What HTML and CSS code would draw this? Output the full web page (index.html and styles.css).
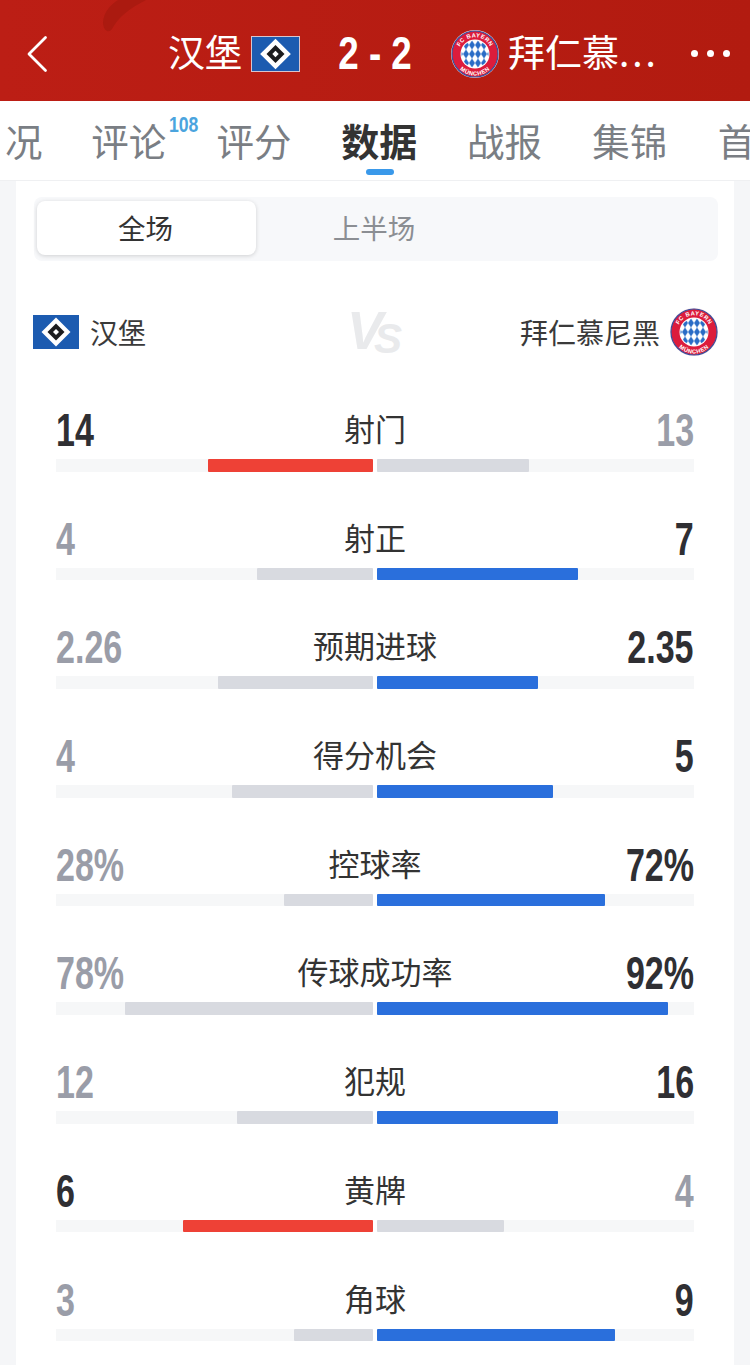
FILE: index.html
```html
<!DOCTYPE html>
<html lang="zh-CN">
<head>
<meta charset="utf-8">
<title>汉堡 2-2 拜仁慕尼黑</title>
<link rel="stylesheet" href="styles.css">
</head>
<body>
<svg class="defs" width="0" height="0" aria-hidden="true">
  <defs>
    <pattern id="loz" width="6" height="9" patternUnits="userSpaceOnUse" x="0" y="1.500">
      <rect width="6" height="9" fill="#fff"/>
      <path d="M3 0 6 4.500 3 9 0 4.500Z" fill="#2a6cc6"/>
    </pattern>
    <path id="arcTop" d="M7.200 24a16.800 16.800 0 0 1 33.600 0"/>
    <path id="arcBot" d="M2.500 24a21.500 21.500 0 0 0 43 0"/>
    <symbol id="hsv" viewBox="0 0 46 34">
      <rect width="46" height="34" fill="#1c5bb0"/>
      <path d="M23 2.500 37.500 17 23 31.500 8.500 17Z" fill="#fff"/>
      <path d="M23 8.500 31.500 17 23 25.500 14.500 17Z" fill="#1c1c1e"/>
      <path d="M23 14 26 17 23 20 20 17Z" fill="#fff"/>
    </symbol>
    <symbol id="fcb" viewBox="0 0 48 48">
      <circle cx="24" cy="24" r="24" fill="#f3dfe6"/>
      <circle cx="24" cy="24" r="23" fill="#dc1c3c" stroke="#3a4f9c" stroke-width="1.200"/>
      <circle cx="24" cy="24" r="14.500" fill="#fff"/>
      <circle cx="24" cy="24" r="13.500" fill="url(#loz)"/>
      <text class="crest-text"><textPath href="#arcTop" startOffset="50%" text-anchor="middle">FC BAYERN</textPath></text>
      <text class="crest-text"><textPath href="#arcBot" startOffset="50%" text-anchor="middle">MÜNCHEN</textPath></text>
    </symbol>
  </defs>
</svg>

<header class="topbar">
  <svg class="swoosh" width="160" height="34" viewBox="0 0 160 34" aria-hidden="true">
    <path d="M146 0C128 9 118 18 112 29 108 34 103 30 103 22 104 12 110 5 118 0Z" fill="#ab1a10"/>
  </svg>
  <svg class="back" width="24" height="38" viewBox="0 0 24 38" aria-hidden="true">
    <path d="M20.500 2.500 4 19l16.500 16.500" fill="none" stroke="#fff" stroke-width="2.800" stroke-linecap="round" stroke-linejoin="round"/>
  </svg>
  <span class="team-title home-title">汉堡</span>
  <svg class="flag-top"><use href="#hsv"/></svg>
  <span class="score"><b class="narrow">2 - 2</b></span>
  <svg class="crest-top"><use href="#fcb"/></svg>
  <span class="team-title away-title">拜仁慕<span class="dots">...</span></span>
  <span class="more" aria-hidden="true"><i></i><i></i><i></i></span>
</header>

<nav class="tabs">
  <span class="tab tab-first">况</span>
  <span class="tab">评论<sup class="badge">108</sup></span>
  <span class="tab">评分</span>
  <span class="tab active">数据</span>
  <span class="tab">战报</span>
  <span class="tab">集锦</span>
  <span class="tab">首页</span>
</nav>

<main class="card">
  <div class="segment">
    <span class="seg seg-on">全场</span>
    <span class="seg">上半场</span>
  </div>

  <div class="teams">
    <div class="team">
      <svg class="flag"><use href="#hsv"/></svg>
      <span>汉堡</span>
    </div>
    <div class="vs" aria-label="VS"><span class="vs-v">V</span><span class="vs-s">S</span></div>
    <div class="team team-away">
      <span>拜仁慕尼黑</span>
      <svg class="crest"><use href="#fcb"/></svg>
    </div>
  </div>

  <section class="stats">
    <div class="stat">
      <div class="head"><span class="num win-num"><b>14</b></span><span class="label">射门</span><span class="num end"><b>13</b></span></div>
      <div class="bars"><div class="track left"><div class="fill red" style="width:52.05%"></div></div><div class="track"><div class="fill gray" style="width:47.95%"></div></div></div>
    </div>
    <div class="stat">
      <div class="head"><span class="num"><b>4</b></span><span class="label">射正</span><span class="num win-num end"><b>7</b></span></div>
      <div class="bars"><div class="track left"><div class="fill gray" style="width:36.59%"></div></div><div class="track"><div class="fill blue" style="width:63.41%"></div></div></div>
    </div>
    <div class="stat">
      <div class="head"><span class="num"><b>2.26</b></span><span class="label">预期进球</span><span class="num win-num end"><b>2.35</b></span></div>
      <div class="bars"><div class="track left"><div class="fill gray" style="width:48.9%"></div></div><div class="track"><div class="fill blue" style="width:50.79%"></div></div></div>
    </div>
    <div class="stat">
      <div class="head"><span class="num"><b>4</b></span><span class="label">得分机会</span><span class="num win-num end"><b>5</b></span></div>
      <div class="bars"><div class="track left"><div class="fill gray" style="width:44.48%"></div></div><div class="track"><div class="fill blue" style="width:55.52%"></div></div></div>
    </div>
    <div class="stat">
      <div class="head"><span class="num"><b>28%</b></span><span class="label">控球率</span><span class="num win-num end"><b>72%</b></span></div>
      <div class="bars"><div class="track left"><div class="fill gray" style="width:28.08%"></div></div><div class="track"><div class="fill blue" style="width:71.92%"></div></div></div>
    </div>
    <div class="stat">
      <div class="head"><span class="num"><b>78%</b></span><span class="label">传球成功率</span><span class="num win-num end"><b>92%</b></span></div>
      <div class="bars"><div class="track left"><div class="fill gray" style="width:78.23%"></div></div><div class="track"><div class="fill blue" style="width:91.8%"></div></div></div>
    </div>
    <div class="stat">
      <div class="head"><span class="num"><b>12</b></span><span class="label">犯规</span><span class="num win-num end"><b>16</b></span></div>
      <div class="bars"><div class="track left"><div class="fill gray" style="width:42.9%"></div></div><div class="track"><div class="fill blue" style="width:57.1%"></div></div></div>
    </div>
    <div class="stat">
      <div class="head"><span class="num win-num"><b>6</b></span><span class="label">黄牌</span><span class="num end"><b>4</b></span></div>
      <div class="bars"><div class="track left"><div class="fill red" style="width:59.94%"></div></div><div class="track"><div class="fill gray" style="width:40.06%"></div></div></div>
    </div>
    <div class="stat">
      <div class="head"><span class="num"><b>3</b></span><span class="label">角球</span><span class="num win-num end"><b>9</b></span></div>
      <div class="bars"><div class="track left"><div class="fill gray" style="width:24.92%"></div></div><div class="track"><div class="fill blue" style="width:75.08%"></div></div></div>
    </div>
  </section>
</main>
</body>
</html>
```

FILE: styles.css
```css
* { box-sizing: border-box; }

html, body {
  margin: 0;
  height: 1365px;
  overflow: hidden;
}

body {
  background: #f5f6f8;
  color: #333;
  font-family: "Noto Sans CJK SC", "Liberation Sans", sans-serif;
}

.defs { position: absolute; }

.crest-text {
  font: 700 5.800px "Liberation Sans", sans-serif;
  fill: #fff;
  letter-spacing: .5px;
}

/* top bar */
.topbar {
  position: relative;
  height: 101px;
  display: flex;
  align-items: center;
  padding-left: 25px;
  background: linear-gradient(90deg, #bc1e15, #b21b10);
  color: #fff;
}

.swoosh { position: absolute; left: 0; top: 0; }

.back { margin-top: 6px; flex: none; }

.team-title {
  font-size: 37px;
  line-height: 50px;
  white-space: nowrap;
}

.home-title { margin-left: 119px; }

.dots { letter-spacing: 3px; }

.flag-top {
  width: 49px;
  height: 36px;
  margin-left: 9px;
  margin-top: 6px;
  outline: 1.500px solid #d9c4cc;
  outline-offset: -1.500px;
}

.score {
  width: 75px;
  margin-left: 38px;
  margin-top: 5px;
  display: flex;
  justify-content: center;
  font-size: 46px;
  line-height: 50px;
}

.narrow {
  display: inline-block;
  white-space: nowrap;
  font-family: "Liberation Sans", sans-serif;
  font-weight: 700;
  transform: scaleX(.8);
}

.crest-top {
  width: 48px;
  height: 48px;
  margin-left: 38px;
  margin-top: 7px;
  flex: none;
}

.away-title { margin-left: 9px; width: 148px; }

.more {
  display: flex;
  gap: 9px;
  margin-left: 35px;
  margin-top: 5px;
}

.more i {
  width: 7px;
  height: 7px;
  border-radius: 50%;
  background: #fff;
}

/* tabs */
.tabs {
  height: 80px;
  display: flex;
  background: #fff;
  overflow: hidden;
  border-bottom: 1px solid #eff0f2;
}

.tab {
  position: relative;
  flex: 0 0 125.300px;
  height: 79px;
  text-align: center;
  font-size: 37.500px;
  line-height: 78px;
  color: #7a7e84;
  white-space: nowrap;
}

.tab-first {
  flex-basis: 66px;
  text-align: left;
  padding-left: 5px;
}

.active {
  color: #333;
  font-weight: 700;
  font-size: 38px;
}

.active::after {
  content: "";
  position: absolute;
  left: 49px;
  bottom: 5px;
  width: 28px;
  height: 6px;
  border-radius: 3px;
  background: #3a99ea;
}

.badge {
  position: absolute;
  top: 12px;
  left: 103px;
  font-family: "Liberation Sans", sans-serif;
  font-weight: 700;
  font-size: 22px;
  line-height: 24px;
  color: #4ba4de;
  transform: scaleX(.8);
  transform-origin: left center;
}

/* card */
.card {
  margin: 0 16px;
  height: 1184px;
  background: #fff;
  padding: 16px 16px 0;
  overflow: hidden;
}

.segment {
  height: 64px;
  margin-left: 2px;
  display: flex;
  padding: 4px 3px;
  border-radius: 8px;
  background: #f7f8fa;
}

.seg {
  flex: 0 0 236px;
  height: 54px;
  padding-bottom: 3px;
  display: flex;
  align-items: center;
  justify-content: center;
  font-size: 27.500px;
  color: #8b8e93;
}

.seg-on {
  flex: 0 0 219px;
  padding-right: 2px;
  border-radius: 8px;
  background: #fff;
  color: #333;
  box-shadow: 0 1px 4px rgba(0, 0, 0, .16);
}

.teams {
  height: 48px;
  margin-top: 47px;
  display: grid;
  grid-template-columns: 1fr auto 1fr;
  align-items: center;
}

.team {
  display: flex;
  align-items: center;
  gap: 11px;
  font-size: 28px;
  color: #3a3a3a;
  line-height: 46px;
}

.team-away {
  justify-content: flex-end;
  gap: 10px;
}

.flag {
  width: 46px;
  height: 34px;
  flex: none;
  margin-left: 1px;
}

.crest {
  width: 48px;
  height: 48px;
  flex: none;
}

.vs {
  display: flex;
  align-items: flex-start;
  width: 54px;
  height: 46px;
  font-family: "Liberation Sans", sans-serif;
  font-weight: 700;
  font-style: italic;
  color: #e9eaec;
}

.vs-v { font-size: 54px; line-height: 42px; letter-spacing: -9px; margin-left: -1px; }
.vs-s { font-size: 42px; line-height: 60px; }

/* stats */
.stats { margin: 44px 24px 0; }

.stat { height: 108.700px; }

.head {
  height: 59px;
  display: grid;
  grid-template-columns: 1fr auto 1fr;
  align-items: center;
}

.label {
  font-size: 31px;
  line-height: 56px;
  padding-bottom: 4px;
  color: #333;
  white-space: nowrap;
}

.num {
  font-family: "Liberation Sans", sans-serif;
  font-size: 46px;
  line-height: 60px;
  color: #9a9da8;
  white-space: nowrap;
}

.num b {
  display: inline-block;
  font-weight: 700;
  transform: scaleX(.74);
  transform-origin: left center;
}

.end { text-align: right; }
.end b { transform-origin: right center; }

.win-num { color: #2f2f33; }

.bars {
  display: flex;
  gap: 4px;
  height: 12.500px;
}

.track {
  flex: 1;
  display: flex;
  background: #f6f7f8;
}

.left { justify-content: flex-end; }

.fill { height: 100%; border-radius: 1px; }
.red { background: #ee4136; }
.blue { background: #2a6fdc; }
.gray { background: #d8dae0; }
```
